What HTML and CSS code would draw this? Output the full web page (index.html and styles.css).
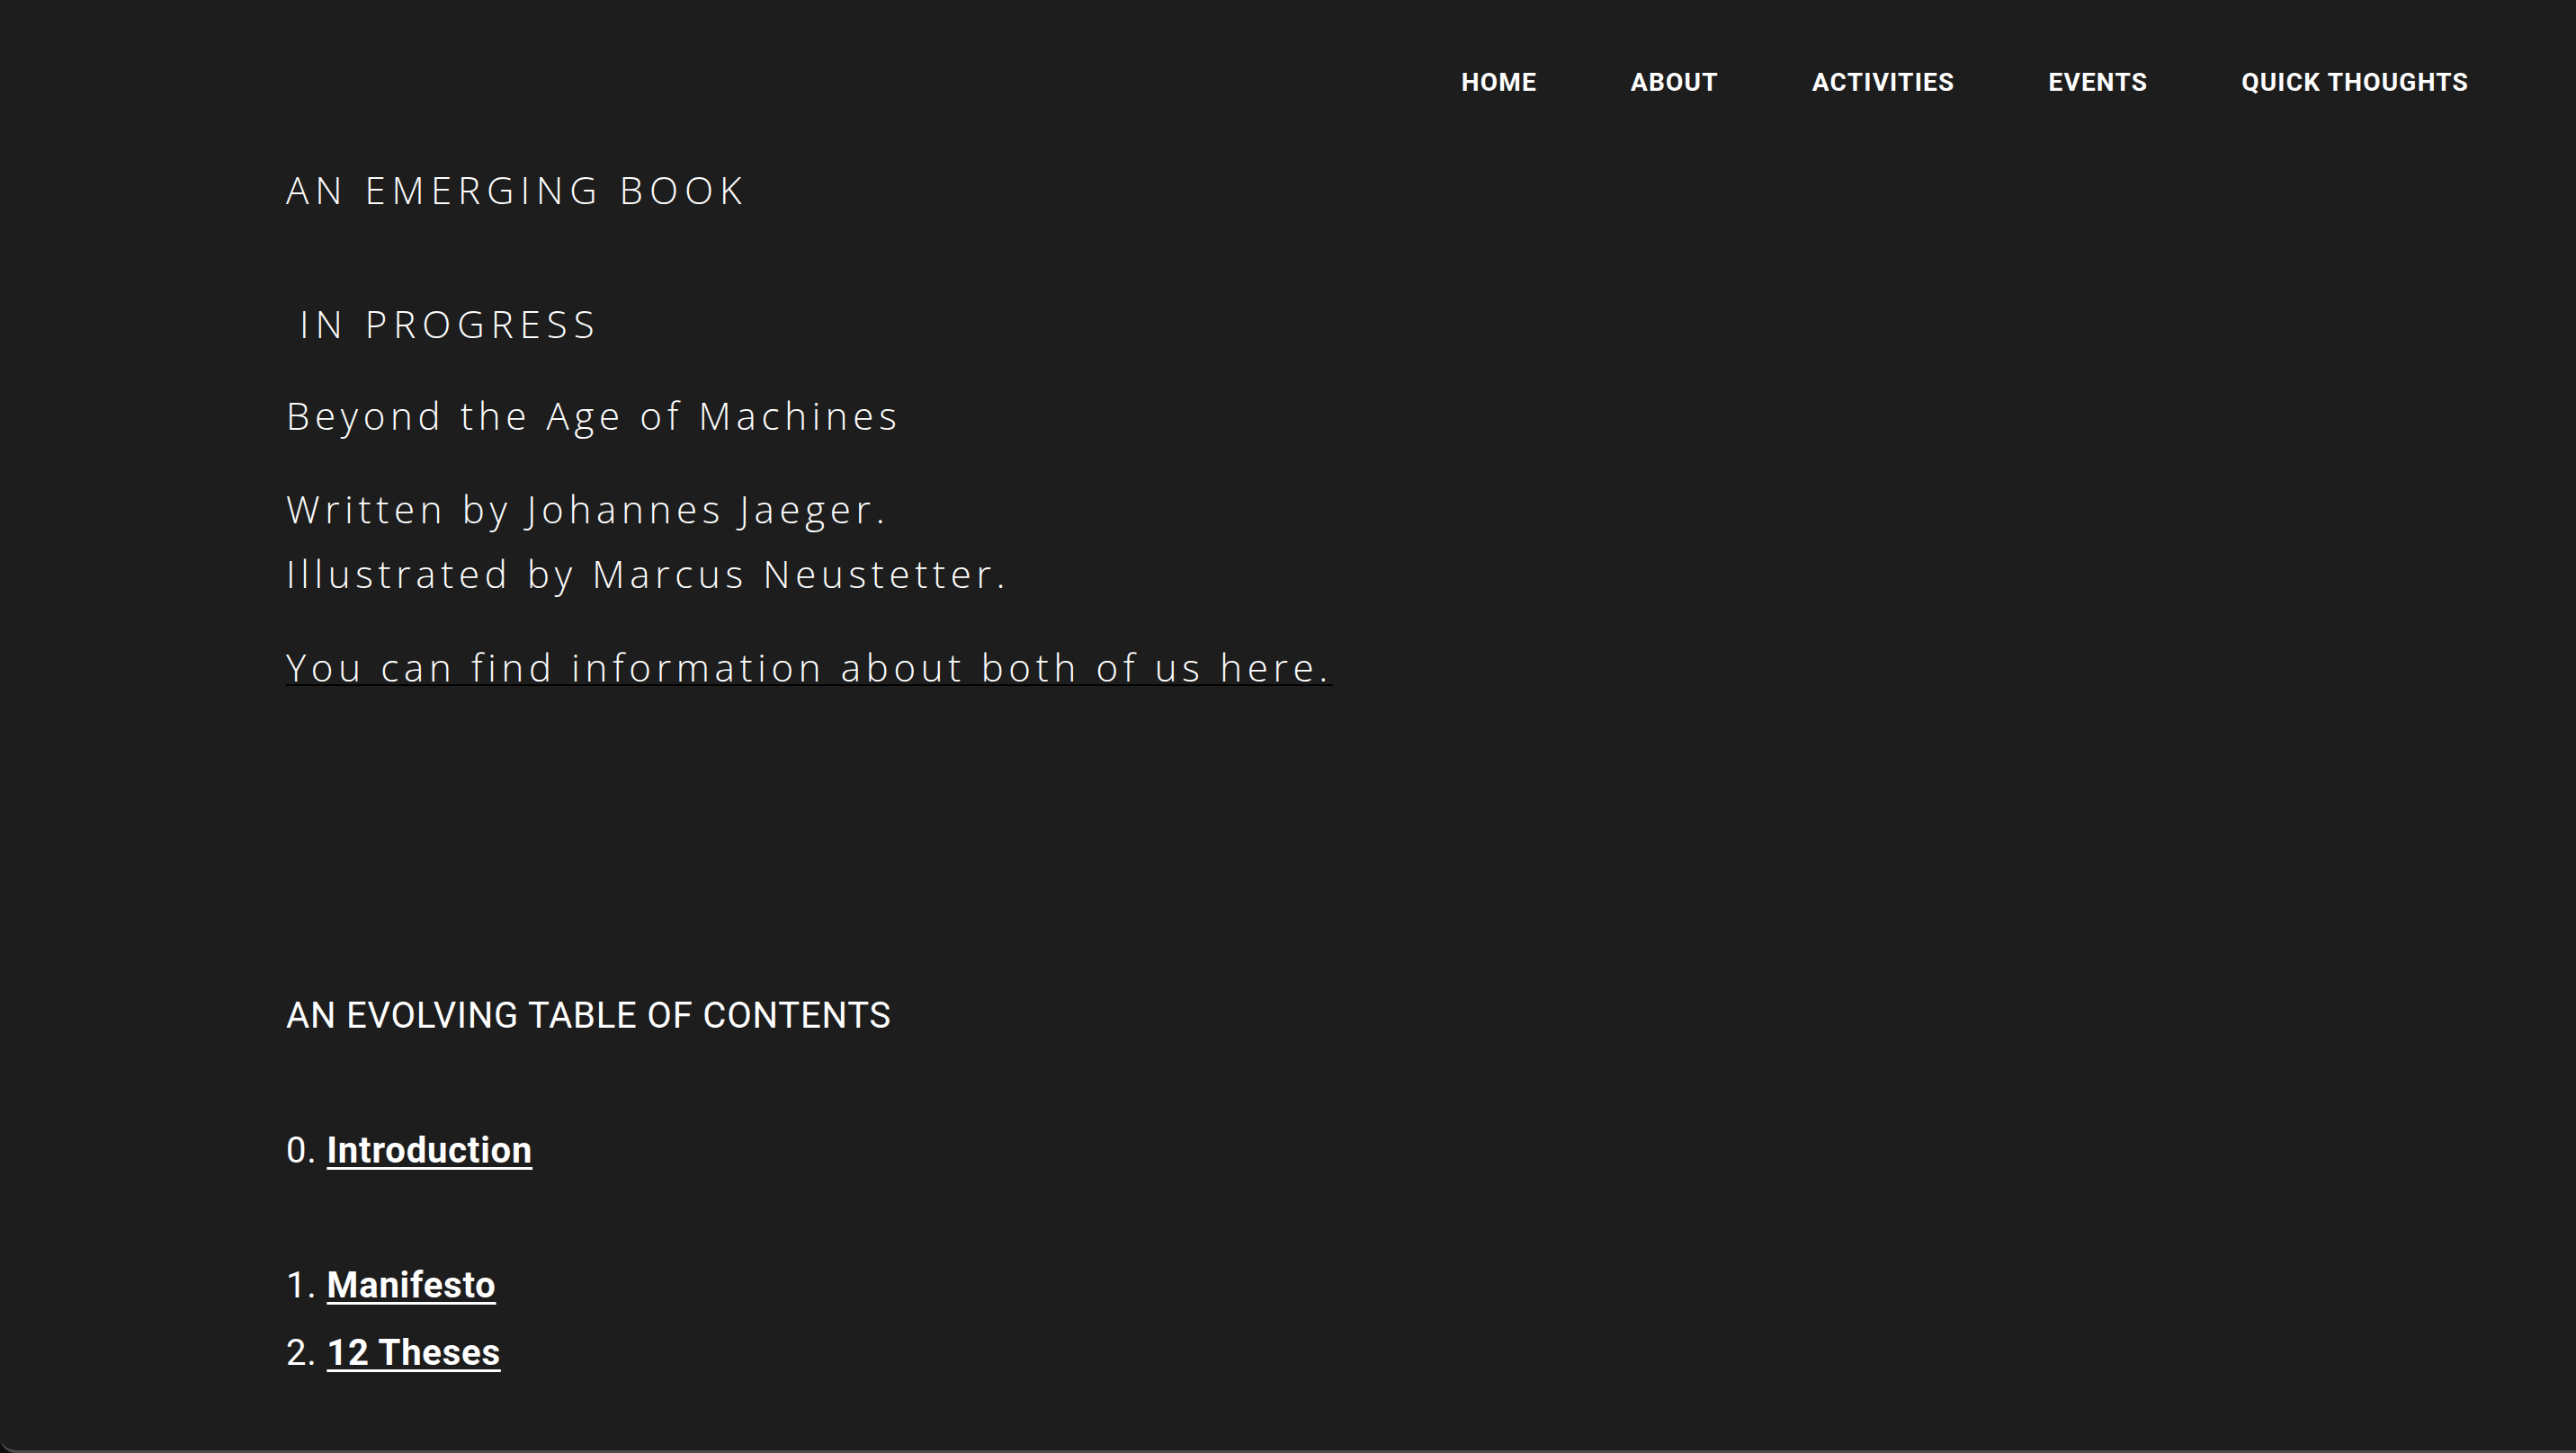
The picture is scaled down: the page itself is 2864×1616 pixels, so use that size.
FILE: index.html
```html
<!DOCTYPE html>
<html lang="en">
<head>
<meta charset="utf-8">
<title>Beyond the Age of Machines</title>
<link rel="stylesheet" href="styles.css">
</head>
<body>
<div class="window">
  <header class="topbar">
    <nav class="nav">
      <a class="nav-link" href="#">HOME</a>
      <a class="nav-link" href="#">ABOUT</a>
      <a class="nav-link" href="#">ACTIVITIES</a>
      <a class="nav-link" href="#">EVENTS</a>
      <a class="nav-link" href="#">QUICK THOUGHTS</a>
    </nav>
  </header>
  <main class="content">
    <section class="intro">
      <h2 class="kicker">AN EMERGING BOOK</h2>
      <h2 class="kicker kicker-second">&nbsp;IN PROGRESS</h2>
      <p class="lead">Beyond the Age of Machines</p>
      <p class="lead">Written by Johannes Jaeger.<br>Illustrated by Marcus Neustetter.</p>
      <p class="lead"><a class="lead-link" href="#">You can find information about both of us here.</a></p>
    </section>
    <section class="toc">
      <h3 class="toc-title">AN EVOLVING TABLE OF CONTENTS</h3>
      <p class="toc-item toc-spaced">0. <a class="toc-link" href="#">Introduction</a></p>
      <p class="toc-item toc-spaced">1. <a class="toc-link" href="#">Manifesto</a></p>
      <p class="toc-item">2. <a class="toc-link" href="#">12 Theses</a></p>
    </section>
  </main>
</div>
</body>
</html>
```
FILE: styles.css
```css
html {
  background: #0e0e0e;
}
body {
  margin: 0;
  font-family: "Open Sans", sans-serif;
  color: #ffffff;
}
.window {
  height: 1616px;
  box-sizing: border-box;
  background: #1d1d1d;
  border-bottom: 3px solid #4c4c4c;
  border-bottom-left-radius: 18px;
  overflow: hidden;
}
.topbar {
  display: flex;
  justify-content: flex-end;
  padding: 72px 119px 0 0;
}
.nav {
  display: flex;
  gap: 104px;
}
.nav-link {
  font-family: Roboto, sans-serif;
  font-weight: 700;
  font-size: 28px;
  line-height: 40px;
  letter-spacing: 1.2px;
  color: #ffffff;
  text-decoration: none;
}
.content {
  padding-left: 318px;
}
.intro {
  padding-top: 63px;
}
.kicker {
  margin: 0;
  font-weight: 300;
  font-size: 42px;
  line-height: 72px;
  letter-spacing: 7px;
}
.kicker-second {
  margin-top: 77px;
  margin-left: -3px;
}
.lead {
  margin: 30px 0 0;
  font-weight: 300;
  font-size: 42px;
  line-height: 72px;
  letter-spacing: 5.7px;
}
.lead + .lead {
  margin-top: 32px;
}
.lead-link {
  color: #ffffff;
  text-decoration: underline;
  text-decoration-color: #000000;
  text-decoration-thickness: 2px;
  text-underline-offset: 3px;
}
.toc {
  margin-top: 314px;
  font-family: Roboto, sans-serif;
  letter-spacing: 0.8px;
}
.toc-title {
  margin: 0 0 75px;
  font-weight: 400;
  font-size: 40px;
  line-height: 75px;
}
.toc-item {
  margin: 0;
  font-weight: 400;
  font-size: 40px;
  line-height: 75px;
}
.toc-spaced {
  margin-bottom: 75px;
}
.toc-spaced + .toc-spaced {
  margin-bottom: 0;
}
.toc-link {
  color: #ffffff;
  font-weight: 700;
  text-decoration: underline;
  text-decoration-thickness: 3px;
  text-underline-offset: 5px;
}
```
